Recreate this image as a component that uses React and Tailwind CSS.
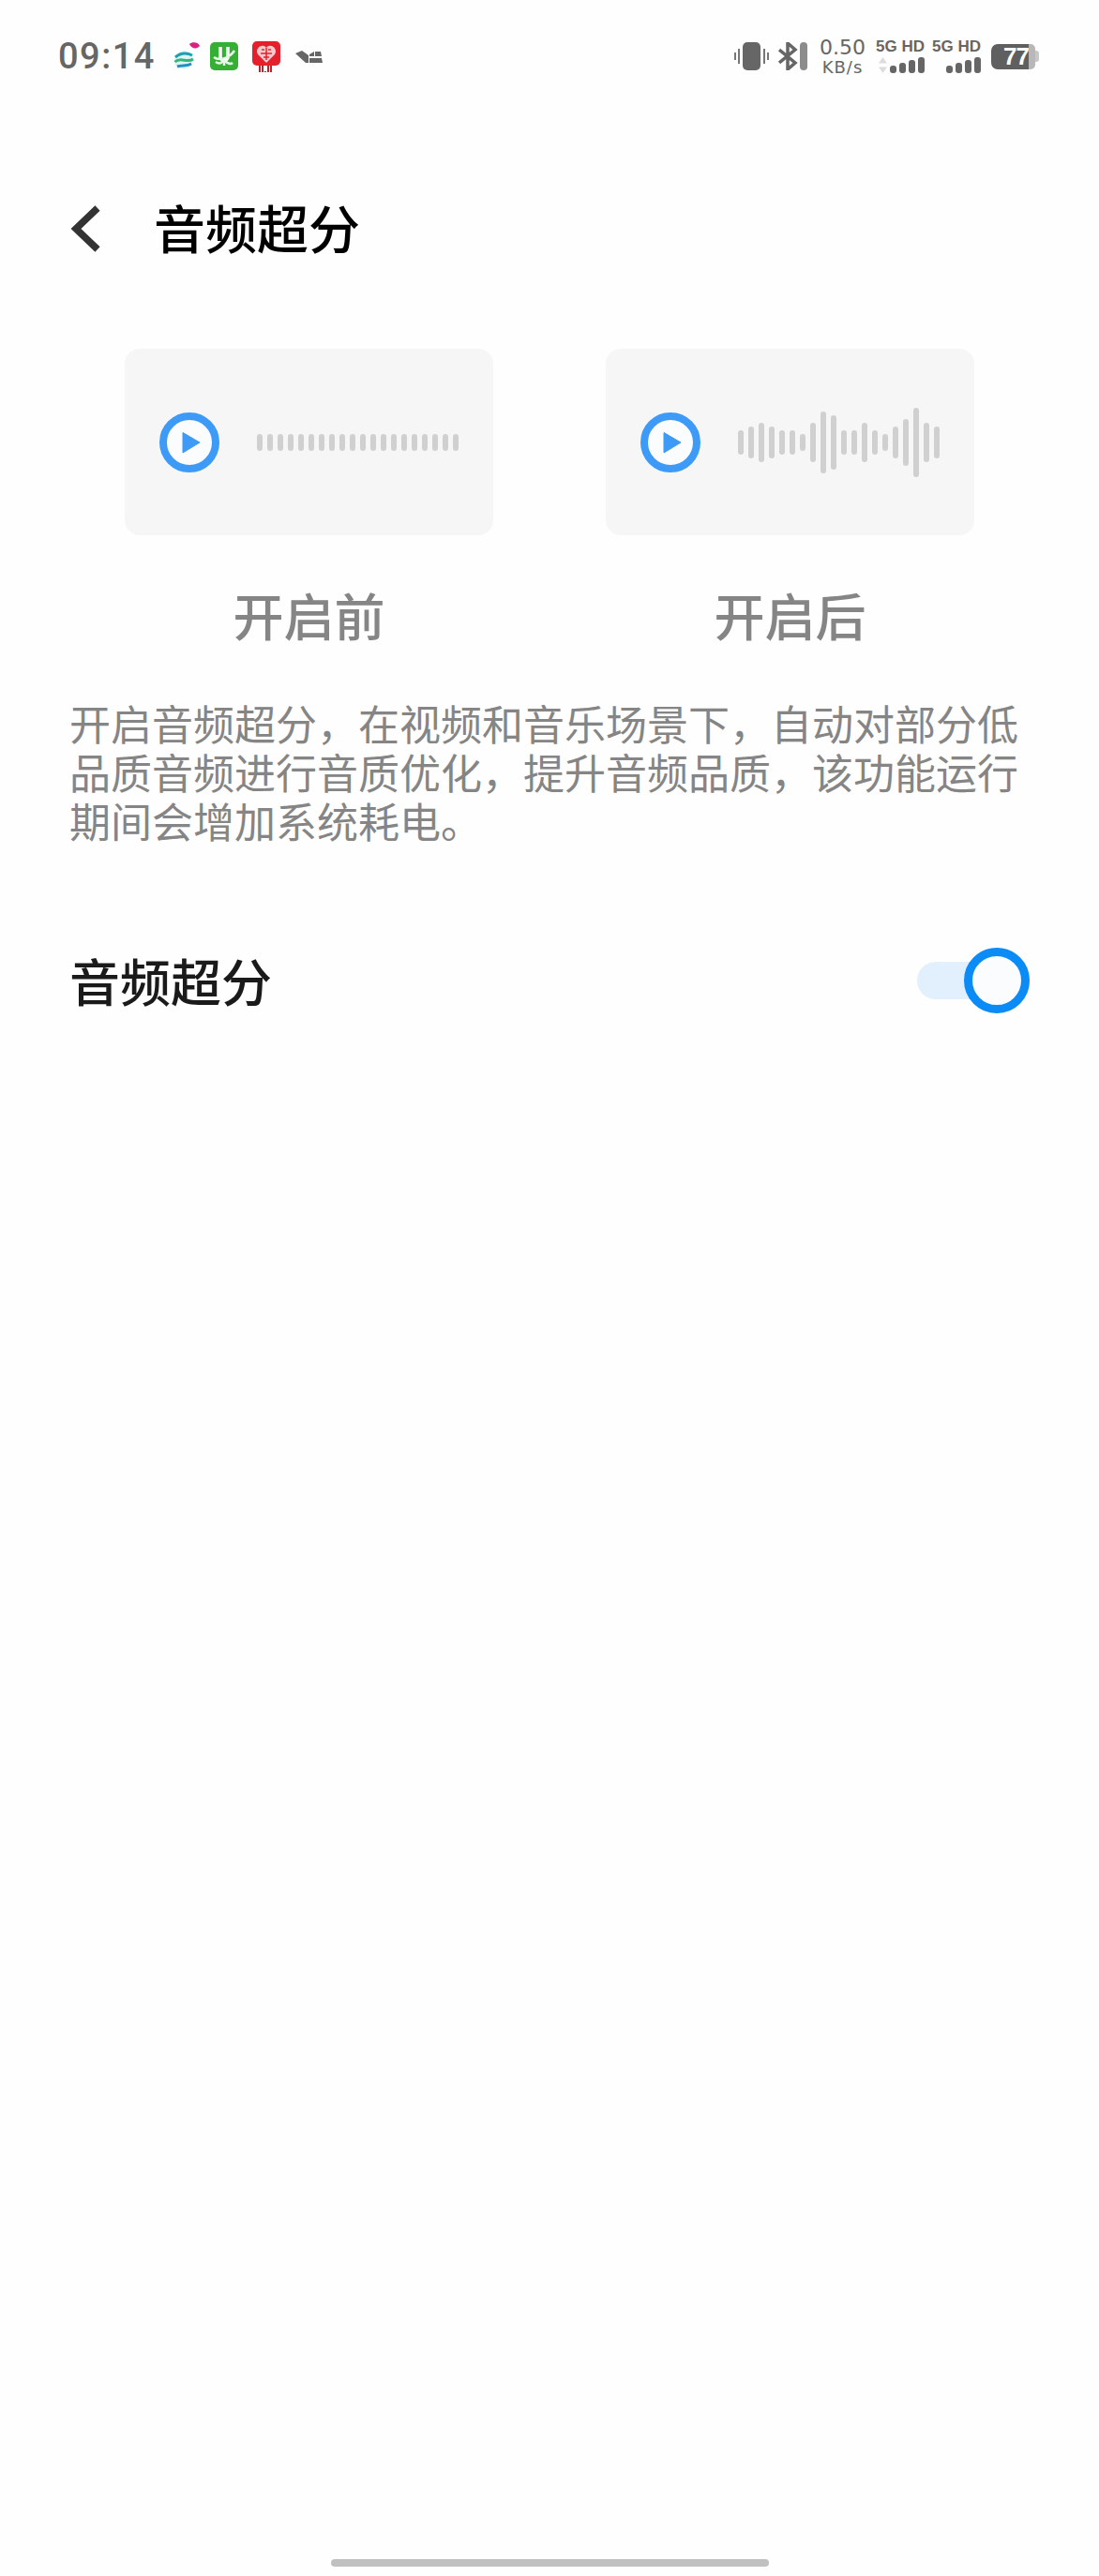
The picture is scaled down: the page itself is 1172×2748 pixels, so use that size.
const cjk = { fontFamily: '"Noto Sans CJK SC", "Noto Sans", sans-serif' };
const latin = { fontFamily: '"Liberation Sans", sans-serif' };

const flatBars = Array.from({ length: 20 }, () => 18);
const waveBars = [26, 34, 42, 34, 26, 26, 18, 42, 66, 58, 26, 26, 42, 26, 18, 34, 50, 74, 42, 34];

const PlayIcon = () => (
  <svg width="64" height="64" viewBox="0 0 64 64" className="shrink-0">
    <circle cx="32" cy="32" r="28" fill="#fbfcfe" stroke="#3d9bf7" strokeWidth="8" />
    <path d="M25 21.5 L43 32 L25 43 Z" fill="#3d9bf7" stroke="#3d9bf7" strokeWidth="1" strokeLinejoin="round" />
  </svg>
);

const Sample = ({ label, bars }) => (
  <div className="w-[393px] flex flex-col items-center">
    <div className="w-full h-[199px] bg-[#f6f6f6] rounded-[16px] flex items-center pl-[37px]">
      <PlayIcon />
      <div className="flex items-center gap-[5px] ml-[40px]">
        {bars.map((h, i) => (
          <div key={i} className="w-[6px] rounded-full bg-[#d0d0d0]" style={{ height: h }} />
        ))}
      </div>
    </div>
    <div className="mt-[53px] text-[54px] leading-[64px] font-medium text-[#858585]">{label}</div>
  </div>
);

const SignalBars = ({ arrows }) => (
  <div className="flex items-end justify-end gap-[3px] h-[17px]">
    {arrows && (
      <svg width="9" height="17" viewBox="0 0 9 17">
        <path d="M4.5 0 L9 6.5 H0 Z" fill="#dcdcdc" />
        <path d="M4.5 17 L9 10.5 H0 Z" fill="#dcdcdc" />
      </svg>
    )}
    {[8, 11, 14, 17].map((h) => (
      <div key={h} className="w-[7px] rounded-[3px] bg-[#666]" style={{ height: h }} />
    ))}
  </div>
);

const NetBlock = ({ arrows }) => (
  <div className="w-[52px] flex flex-col items-end gap-[4px]">
    <div className="text-[17px] leading-[15px] font-bold text-[#666] whitespace-nowrap" style={latin}>5G HD</div>
    <SignalBars arrows={arrows} />
  </div>
);

const StatusBar = () => (
  <div className="h-[60px] mt-[30px] pl-[62px] pr-[64px] flex items-center justify-between">
    <div className="flex items-center">
      <span className="w-[123px] text-[38px] leading-[48px] font-medium text-[#666] tracking-[1.5px]" style={{ fontFamily: 'Roboto, sans-serif' }}>09:14</span>
      {/* carrier mark: striped ball and pink leaf */}
      <svg width="28" height="32" viewBox="0 0 28 32" className="mr-[11px]">
        <circle cx="11" cy="20" r="10" fill="#dff3f4" />
        <path d="M2 17 C8 12 14 12 20 15" fill="none" stroke="#1e9fb0" strokeWidth="3" />
        <path d="M1.5 22 C8 16 14 24 21 19" fill="none" stroke="#35b57a" strokeWidth="3" />
        <path d="M4 27 C9 25 14 27 19 24" fill="none" stroke="#1e8fc0" strokeWidth="3" />
        <path d="M17 3 C20 0 27 1 28 5 C25 9 19 8 17 3 Z" fill="#d6237f" />
      </svg>
      {/* green app tile */}
      <div className="w-[30px] h-[30px] rounded-[5px] bg-[#35b035] flex items-center justify-center mr-[15px]">
        <svg width="26" height="26" viewBox="0 0 26 26">
          <path d="M9 3 V14 C9 18 17 18 17 14 V3" fill="none" stroke="#fff" strokeWidth="3.5" />
          <path d="M2 14 C7 18 18 16 24 7 M13 17 V23 M4 19 C8 22 10 20 12 18 M14 18 C17 21 20 22 22 20" fill="none" stroke="#e8f5e8" strokeWidth="2.5" />
        </svg>
      </div>
      {/* red shopping tile with heart and 11.11 */}
      <div className="w-[30px] h-[33px] flex flex-col items-center mr-[16px]">
        <div className="w-[30px] h-[26px] rounded-[5px] bg-[#e5202c] flex items-center justify-center">
          <svg width="22" height="20" viewBox="0 0 22 20">
            <path d="M11 20 L2 11 C-2 5 7 -2 11 4 C15 -2 24 5 20 11 Z" fill="#f6c9cc" />
            <path d="M6 6 H9 M13 6 H16 M5 10 H17 M8 14 H14 M11 4 V17" stroke="#e5202c" strokeWidth="1.5" />
          </svg>
        </div>
        <svg width="16" height="7" viewBox="0 0 16 7">
          <path d="M1 0 V7 M4 0 V7 M7 6 V7 M10 0 V7 M13 0 V7" stroke="#b5262e" strokeWidth="2" />
        </svg>
      </div>
      <svg width="29" height="13" viewBox="0 0 29 13">
        <path d="M0 3 L7 0 L14 5 V13 H11 Z M15 4 L20 1 V6 L15 6 Z M21 1 L27 1 L28 6 H21 Z M15 8 H28 L29 13 H15 Z" fill="#666" />
      </svg>
    </div>

    <div className="flex items-center">
      {/* vibrate */}
      <svg width="37" height="30" viewBox="0 0 37 30">
        <rect x="9" y="0" width="19" height="30" rx="5" fill="#666" />
        <path d="M1 11 V19 M5 7 V23 M32 7 V23 M36 11 V19" stroke="#777" strokeWidth="2" />
      </svg>
      {/* bluetooth with battery level bar */}
      <svg width="31" height="30" viewBox="0 0 31 30" className="ml-[10px]">
        <path d="M1 8 L18 22 L10 29 V1 L18 8 L1 22" fill="none" stroke="#666" strokeWidth="3.5" />
        <rect x="23" y="0" width="8" height="30" rx="4" fill="#8c8c8c" />
      </svg>
      <div className="ml-[13px] w-[49px] flex flex-col items-center text-[#666]" style={{ fontFamily: '"DejaVu Sans", sans-serif' }}>
        <span className="text-[22px] leading-[23px]">0.50</span>
        <span className="text-[18px] leading-[19px] tracking-[1px]">KB/s</span>
      </div>
      <div className="ml-[11px]"><NetBlock arrows /></div>
      <div className="ml-[8px]"><NetBlock /></div>
      {/* battery */}
      <div className="ml-[11px] flex items-center">
        <div className="w-[40px] h-[27px] rounded-l-[7px] bg-[#5f5f5f] flex items-center justify-end text-white font-bold text-[26px] leading-none tracking-[-1px]" style={latin}>77</div>
        <div className="w-[7px] h-[27px] rounded-r-[5px] bg-[#b8b8b8]" />
        <div className="w-[4px] h-[12px] rounded-r-[3px] bg-[#c8c8c8]" />
      </div>
    </div>
  </div>
);

export default function App() {
  return (
    <div className="w-[1172px] h-[2748px] bg-[#fefefe] flex flex-col overflow-hidden" style={cjk}>
      <StatusBar />

      {/* header */}
      <div className="mt-[114px] flex items-center pl-[74px] h-[80px]">
        <svg width="36" height="52" viewBox="0 0 36 52" className="shrink-0">
          <path d="M30 4 L7 26 L30 48" fill="none" stroke="#333" strokeWidth="7.5" />
        </svg>
        <h1 className="ml-[54px] mb-[6px] text-[55px] leading-[64px] font-medium text-black">音频超分</h1>
      </div>

      <div className="mt-[88px] pl-[133px] flex gap-[120px]">
        <Sample label="开启前" bars={flatBars} />
        <Sample label="开启后" bars={waveBars} />
      </div>

      <p className="mt-[57px] mx-[74px] text-[44px] leading-[52px] text-[#858585]">
        开启音频超分，在视频和音乐场景下，自动对部分低品质音频进行音质优化，提升音频品质，该功能运行期间会增加系统耗电。
      </p>

      <div className="mt-[110px] ml-[74px] mr-[74px] flex items-center justify-between h-[70px]">
        <span className="text-[54px] leading-[64px] font-medium text-[#1a1a1a]">音频超分</span>
        <div className="relative w-[120px] h-[40px] rounded-full bg-[#e2f0fd]">
          <div className="absolute right-0 top-[-15px] w-[70px] h-[70px] rounded-full bg-[#fbfcfe] border-[9px] border-[#0a8bf5]" />
        </div>
      </div>

      <div className="mt-auto mb-[10px] mx-auto w-[467px] h-[8px] rounded-full bg-[#c0c0c0]" />
    </div>
  );
}
